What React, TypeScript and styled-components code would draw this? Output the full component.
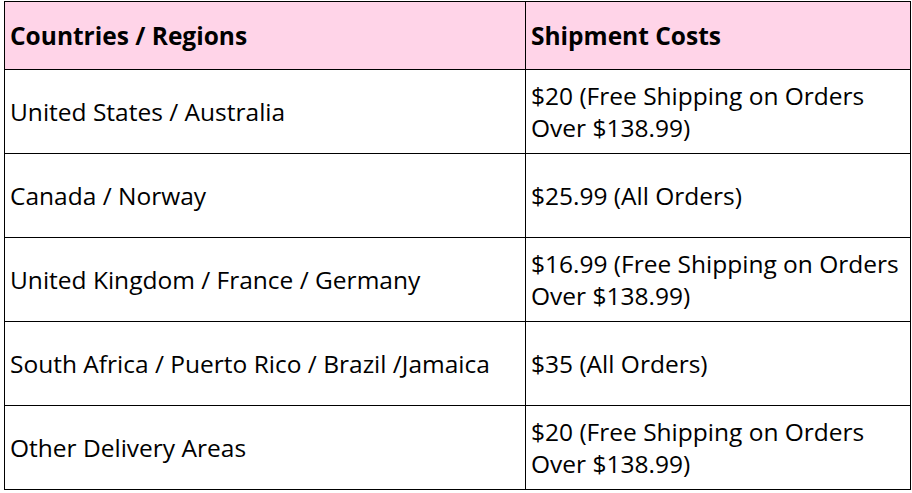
import React from "react";
import styled, { createGlobalStyle } from "styled-components";

const GlobalStyle = createGlobalStyle`
  body {
    margin: 0;
    background: #ffffff;
    font-family: "Open Sans", "Noto Sans", sans-serif;
  }
`;

const Page = styled.div`
  padding: 1px 0 0 4px;
`;

const Table = styled.table`
  border-collapse: collapse;
  table-layout: fixed;
  width: 906px;
  color: #000000;
  font-size: 24.5px;
`;

const HeadCell = styled.th<{ $width: number }>`
  box-sizing: border-box;
  width: ${(p) => p.$width}px;
  height: 68px;
  padding: 0 5px;
  background: #ffd4e8;
  border: 1px solid #000000;
  font-weight: 700;
  text-align: left;
  vertical-align: middle;
  white-space: nowrap;
`;

const Cell = styled.td`
  box-sizing: border-box;
  height: 84px;
  padding: 0 5px;
  border: 1px solid #000000;
  line-height: 32px;
  vertical-align: middle;
  white-space: nowrap;
`;

const rows = [
  { region: "United States / Australia", cost: ["$20 (Free Shipping on Orders", "Over $138.99)"] },
  { region: "Canada / Norway", cost: ["$25.99 (All Orders)"] },
  { region: "United Kingdom / France / Germany", cost: ["$16.99 (Free Shipping on Orders", "Over $138.99)"] },
  { region: "South Africa / Puerto Rico / Brazil /Jamaica", cost: ["$35 (All Orders)"] },
  { region: "Other Delivery Areas", cost: ["$20 (Free Shipping on Orders", "Over $138.99)"] },
];

export default function App() {
  return (
    <Page>
      <GlobalStyle />
      <Table>
        <thead>
          <tr>
            <HeadCell $width={521}>Countries / Regions</HeadCell>
            <HeadCell $width={385}>Shipment Costs</HeadCell>
          </tr>
        </thead>
        <tbody>
          {rows.map((row) => (
            <tr key={row.region}>
              <Cell>{row.region}</Cell>
              <Cell>
                {row.cost.map((line, i) => (
                  <React.Fragment key={line}>
                    {i > 0 && <br />}
                    {line}
                  </React.Fragment>
                ))}
              </Cell>
            </tr>
          ))}
        </tbody>
      </Table>
    </Page>
  );
}
